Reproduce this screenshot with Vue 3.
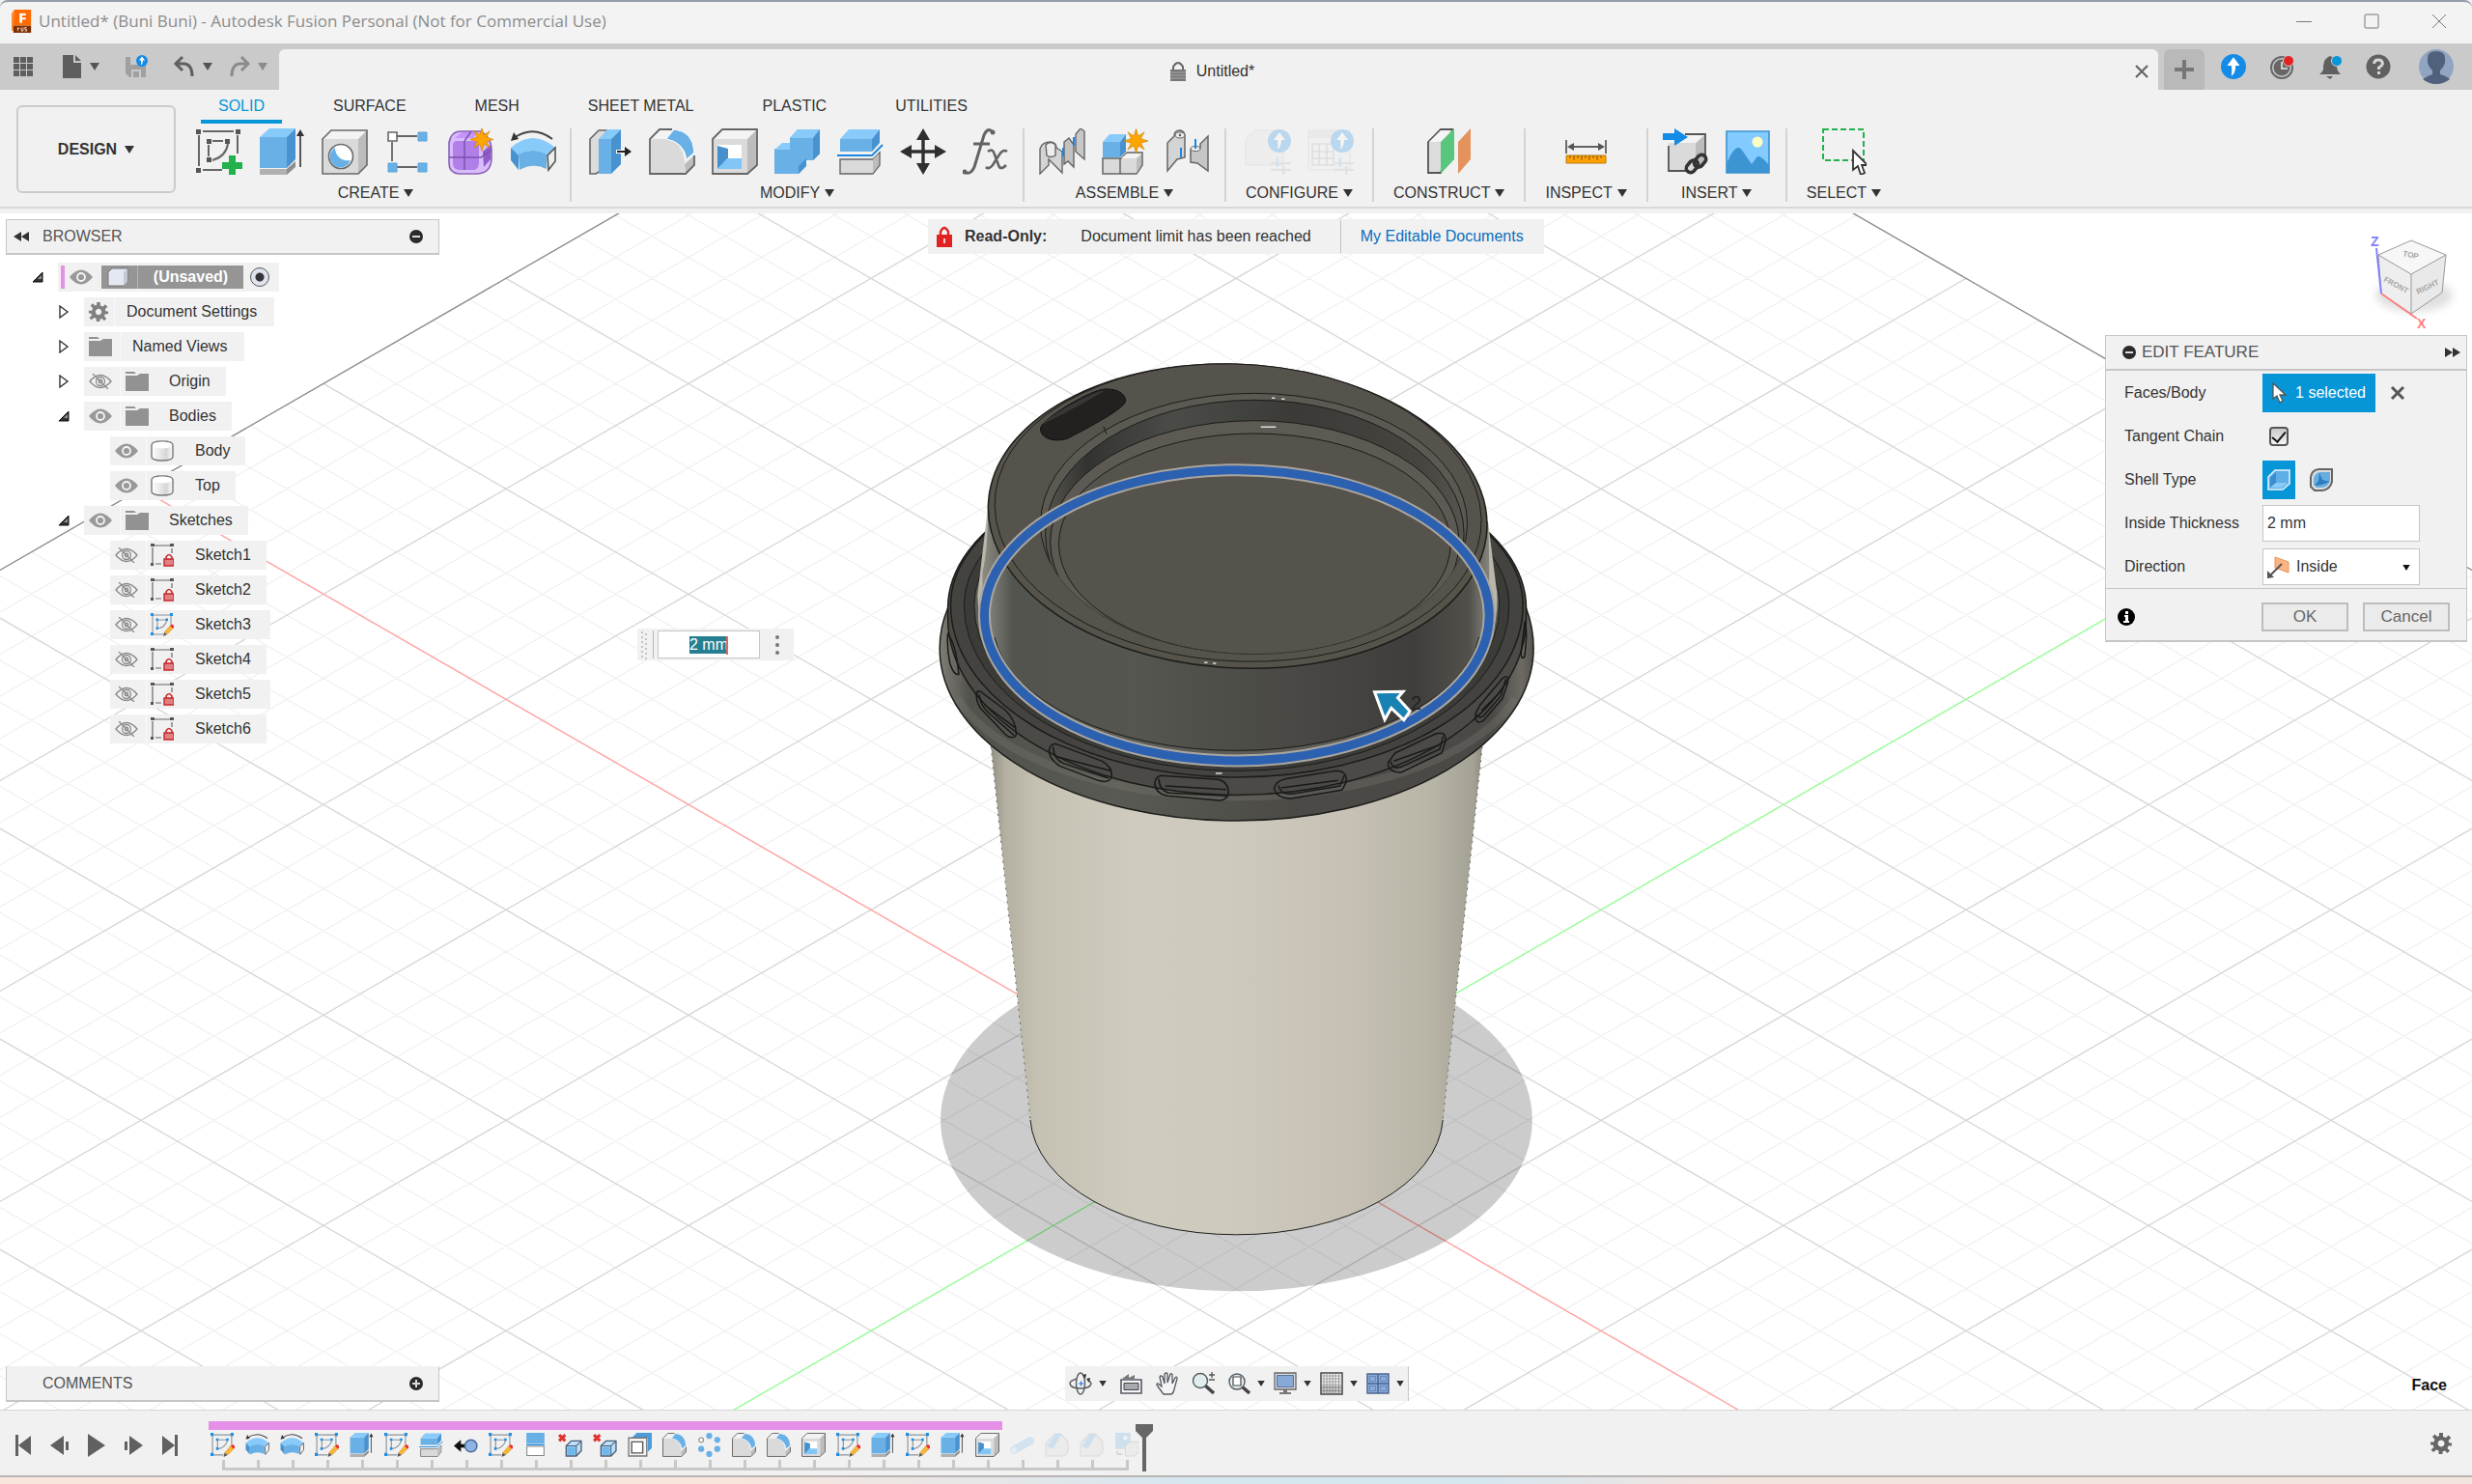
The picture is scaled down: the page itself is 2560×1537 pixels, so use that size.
<script setup>
import { onMounted, ref } from 'vue'

const tabs = ['SOLID', 'SURFACE', 'MESH', 'SHEET METAL', 'PLASTIC', 'UTILITIES']

const panels = [
  { name: 'CREATE', icons: ['sketch-new', 'extrude', 'hole', 'pattern', 'form', 'revolve'] },
  { name: 'MODIFY', icons: ['presspull', 'fillet', 'shell', 'combine', 'split', 'move', 'fx'] },
  { name: 'ASSEMBLE', icons: ['joint', 'component', 'asbuilt'] },
  { name: 'CONFIGURE', icons: ['config', 'config-table'], off: true },
  { name: 'CONSTRUCT', icons: ['plane'] },
  { name: 'INSPECT', icons: ['measure'] },
  { name: 'INSERT', icons: ['derive', 'picture'] },
  { name: 'SELECT', icons: ['select'] },
]

const tree = [
  { label: 'Document Settings', level: 1, toggle: 'closed', cells: ['gear'], tight: true },
  { label: 'Named Views', level: 1, toggle: 'closed', cells: ['folder'], tight: true },
  { label: 'Origin', level: 1, toggle: 'closed', cells: ['hidden', 'folder'] },
  { label: 'Bodies', level: 1, toggle: 'open', cells: ['eye', 'folder'] },
  { label: 'Body', level: 2, cells: ['eye', 'body'] },
  { label: 'Top', level: 2, cells: ['eye', 'body'] },
  { label: 'Sketches', level: 1, toggle: 'open', cells: ['eye', 'folder'] },
  { label: 'Sketch1', level: 2, cells: ['hidden', 'sketch-lock'] },
  { label: 'Sketch2', level: 2, cells: ['hidden', 'sketch-lock'] },
  { label: 'Sketch3', level: 2, cells: ['hidden', 'sketch'], wide: true },
  { label: 'Sketch4', level: 2, cells: ['hidden', 'sketch-lock'] },
  { label: 'Sketch5', level: 2, cells: ['hidden', 'sketch-lock'], wide: true },
  { label: 'Sketch6', level: 2, cells: ['hidden', 'sketch-lock'] },
]

const timeline = [
  'sketch', 'revolve', 'revolve', 'sketch', 'extrude', 'sketch', 'split', 'offset', 'sketch',
  'halfplane', 'remove', 'remove', 'scale', 'fillet', 'circular', 'fillet', 'fillet', 'shell',
  'sketch', 'extrude', 'sketch', 'extrude', 'shell', 'pipe', 'chamfer', 'chamfer', 'decal',
]
const firstSuppressed = 23

const playback = ['first', 'prev', 'play', 'next', 'last']

const navTools = [
  { icon: 'orbit', menu: true },
  { icon: 'lookat' },
  { icon: 'pan' },
  { icon: 'zoom' },
  { icon: 'fit', menu: true },
  { icon: 'display', menu: true },
  { icon: 'grid', menu: true },
  { icon: 'views', menu: true },
]

// Ground grid: cell (i, j) of the plane projected around the model origin.
const point = (i, j) => `${(1280 + (j - i) * 37.8).toFixed(1)} ${(1160.3 + (i + j) * 21.8).toFixed(1)}`
const gridPath = (major) => {
  let d = ''
  for (let n = -30; n <= 75; n++) {
    if (n === 0 || n === -30 || (n % 5 === 0) !== major) continue
    d += `M${point(n, -30)}L${point(n, 80)}M${point(-30, n)}L${point(80, n)}`
  }
  return d
}
const minor = gridPath(false)
const major = gridPath(true)
const edge = `M${point(75, -30)}L${point(-30, -30)}L${point(-30, 75)}`
const xAxis = `M${point(0, -30)}L${point(0, 75)}`
const yAxis = `M${point(-30, 0)}L${point(75, 0)}`

const floatingValue = ref(null)
const thickness = ref('2 mm')
const chain = ref(true)
onMounted(() => {
  floatingValue.value.focus()
  floatingValue.value.select()
})
</script>

<template>
  <div class="app">
    <svg class="defs" aria-hidden="true">
      <symbol id="i-sketch-new" viewBox="0 0 48 48">
        <g fill="none" stroke="#666" stroke-width="2"><path d="M7 3H39M43 7V26M3 7V39M7 43H27M17 13H28M13 17V29" /><path d="M33 16Q31 29 17 33" /></g>
        <path fill="#555" d="M0 1h5v5H0zM41 1h5v5h-5zM0 41h5v5H0zM11 11h5v5h-5zM30 11h5v5h-5zM11 30h5v5h-5z" />
        <path fill="#22b14c" d="M34 28h7v7h7v7h-7v6h-7v-6h-7v-7h7z" />
      </symbol>
      <symbol id="i-extrude" viewBox="0 0 48 48">
        <path fill="#68b0e6" d="M1 9H29V41H1z" /><path fill="#88cbfb" d="M1 9L11 0H38L29 9z" /><path fill="#4893cf" d="M29 9L38 0V32L29 41z" />
        <path fill="#b0b0b0" d="M1 42H29V48H1z" /><path fill="#8e8e8e" d="M29 42L38 34V40L29 48z" />
        <path d="M43 5V40" stroke="#333" stroke-width="1.6" /><path fill="#333" d="M43 1l4 7h-8z" />
      </symbol>
      <symbol id="i-hole" viewBox="0 0 48 48">
        <path fill="#dadada" d="M1 11H38V47H1z" /><path fill="#f3f3f3" d="M1 11L10 2H47L38 11z" /><path fill="#bcbcbc" d="M38 11L47 2V38L38 47z" />
        <path d="M1 11L10 2H47V38L38 47H1z" fill="none" stroke="#6a6a6a" stroke-width="1.6" />
        <ellipse cx="20" cy="29" rx="12.500" ry="12.500" fill="#fff" stroke="#6a6a6a" stroke-width="1.6" />
        <path fill="#68b0e6" d="M14 20A11 11 0 1 0 30 33A13 13 0 0 1 14 20z" />
      </symbol>
      <symbol id="i-pattern" viewBox="0 0 48 48">
        <path d="M13 8H34M8 14V34M13 40H34" stroke="#666" stroke-width="1.8" /><path fill="#fff" stroke="#666" stroke-width="1.600" d="M4 4h9v9H4z" />
        <path fill="#68b0e6" stroke="#5aa2da" d="M35 4h9v9h-9zM4 36h9v9H4zM35 36h9v9h-9z" />
      </symbol>
      <symbol id="i-form" viewBox="0 0 48 48">
        <path fill="#d9bdfb" stroke="#8a62b8" stroke-width="1.6" d="M2 15Q4 3 14 3H35Q46 10 46 22V32Q45 47 30 47H12Q2 46 2 36z" />
        <path fill="#b07fe8" d="M6 18Q6 13 10 13H28Q33 14 33 18V37Q32 43 27 43H12Q6 42 6 36z" /><path fill="#8f5cc9" d="M37 24L45 17V32L38 40z" /><path fill="#c493ff" d="M8 10L15 4H31L27 10z" />
        <path d="M18 13V43M2 30H35L46 22M18 13L25 3" fill="none" stroke="#7a52ab" stroke-width="1.4" />
        <use href="#i-star" x="24" y="-1" width="24" height="25" />
      </symbol>
      <symbol id="i-star" viewBox="0 0 24 24"><path fill="#ffa500" stroke="#c98200" stroke-width=".6" d="M12 0l2.200 7.200 6-4-3.400 6.400L24 12l-7.200 2.200 3.400 6.200-6-3.600L12 24l-2.200-7.200-6 3.600 3.400-6.200L0 12l7.200-2.400-3.400-6.400 6 4z" /></symbol>
      <symbol id="i-revolve" viewBox="0 0 48 48">
        <path fill="none" stroke="#444" stroke-width="2" d="M4 10Q24-4 44 11" /><path fill="#333" d="M1 13L4 4L9 11z" />
        <path fill="#88cbfb" d="M1 20Q24 0 47 20L39 28Q24 18 8 28z" /><path fill="#68b0e6" d="M9 27Q24 19 38 27V42Q24 35 10 43z" /><path fill="#4893cf" d="M1 20L9 28V43L1 33z" />
        <path fill="#eee" stroke="#555" stroke-width="1.600" d="M39 28L47 20V34L40 43z" />
      </symbol>
      <symbol id="i-presspull" viewBox="0 0 48 48">
        <path fill="#dcdcdc" stroke="#666" stroke-width="1.600" d="M10 47H4V11L13 2H21V40z" /><path fill="#68b0e6" d="M13 11H26V47H13z" /><path fill="#88cbfb" d="M13 11L22 1H36L26 11z" /><path fill="#4893cf" d="M26 11L36 1V37L26 47z" />
        <path stroke="#fff" stroke-width="4" d="M31 24H42" /><path d="M32 24H42" stroke="#222" stroke-width="2" /><path fill="#222" d="M40 19l7 5-7 5z" />
      </symbol>
      <symbol id="i-fillet" viewBox="0 0 48 48">
        <path fill="#dadada" d="M1 11H18Q36 14 37 37V47H1z" /><path fill="#f3f3f3" d="M1 11L11 1H26L18 11z" /><path fill="#bcbcbc" d="M37 37L47 28V38L38 47z" />
        <path d="M47 28V38L38 47H1V11L11 1H24" fill="none" stroke="#666" stroke-width="1.800" /><path fill="#68b0e6" stroke="#fff" d="M18 11L26 1Q46 3 47 25L39 32Q36 14 18 11z" />
      </symbol>
      <symbol id="i-shell" viewBox="0 0 48 48">
        <path fill="#dadada" d="M1 11H37V47H1z" /><path fill="#f3f3f3" d="M1 11L11 1H47L37 11z" /><path fill="#bcbcbc" d="M37 11L47 1V38L37 47z" />
        <path d="M1 11L11 1H47V38L37 47H1z" fill="none" stroke="#666" stroke-width="1.800" /><path fill="#fff" d="M6 17H31V42H6z" /><path fill="#4590cc" d="M6 18L17 21V32L6 42z" /><path fill="#82c6f8" d="M6 42L16 31H31V42z" />
      </symbol>
      <symbol id="i-combine" viewBox="0 0 48 48">
        <path fill="#68b0e6" d="M0 21H16V10L24 1H47V26L40 33H33V39L25 47H0z" /><path fill="#88cbfb" d="M0 22L8 15H16V10L24 1H47L40 10H16V22z" /><path fill="#4893cf" d="M40 10L47 1V26L40 33zM25 39L33 31V39L25 47z" />
      </symbol>
      <symbol id="i-split" viewBox="0 0 48 48">
        <path fill="#68b0e6" d="M3 11H36V24H3z" /><path fill="#88cbfb" d="M3 11L12 1H44L36 11z" /><path fill="#4893cf" d="M36 11L44 1V15L36 24z" /><path d="M0 28H36L47 17" fill="none" stroke="#1c86df" stroke-width="1.800" />
        <path fill="#dadada" stroke="#666" stroke-width="1.400" d="M3 32H37L44 25V38L37 47H3z" /><path fill="#bcbcbc" d="M37 32L43 26V38L37 46z" />
      </symbol>
      <symbol id="i-move" viewBox="0 0 48 48"><path d="M24 8V40M8 24H40" stroke="#2f2f2f" stroke-width="3.400" /><path fill="#2f2f2f" d="M24 0l7 12H17zM24 48l7-12H17zM0 24l12-7v14zM48 24l-12-7v14z" /></symbol>
      <symbol id="i-fx" viewBox="0 0 48 48">
        <path d="M31 4Q26-2 22 7L12 40Q8 49 1 45M11 16H28" fill="none" stroke="#636363" stroke-width="3" /><path d="M26 24Q31 20 33 27L37 38Q39 44 45 38M46 24Q42 21 38 27L31 38Q27 43 24 40" fill="none" stroke="#636363" stroke-width="2.600" /><circle cx="31" cy="4" r="2.500" fill="#636363" /><circle cx="2" cy="45" r="2.500" fill="#636363" />
      </symbol>
      <symbol id="i-joint" viewBox="0 0 48 48">
        <g fill="#d4d4d4" stroke="#666" stroke-width="1.400"><path d="M1 47V21Q3 14 12 14Q18 15 18 20L24 24V46L18 40L10 32V38z" /><path fill="#c2c2c2" d="M26 37V14L31 10L36 17V40L30 34z" /><path fill="#c8c8c8" d="M38 24V6L43 0L47 3V32z" /></g>
        <path fill="#eee" stroke="#666" stroke-width="1.400" d="M7 17Q12 12 17 17V28Q12 31 8 28z" /><path d="M25 20V29M36 9V18" stroke="#1c86df" stroke-width="2" />
      </symbol>
      <symbol id="i-component" viewBox="0 0 48 48">
        <path fill="#68b0e6" d="M1 14H19V30H1z" /><path fill="#88cbfb" d="M1 14L8 6H25L19 14z" /><path fill="#4893cf" d="M19 14L25 6V24L19 30z" />
        <path fill="#dadada" stroke="#666" stroke-width="1.500" d="M1 31H20L26 25H42V38L36 47H1z" /><path fill="#f3f3f3" d="M20 31L26 26H41L35 31z" /><path fill="#bcbcbc" d="M36 32L41 27V38L36 46z" /><path d="M19 31V47" stroke="#666" stroke-width="1.500" /><use href="#i-star" x="23" y="0" width="25" height="26" />
      </symbol>
      <symbol id="i-asbuilt" viewBox="0 0 48 48">
        <path fill="#d4d4d4" stroke="#666" stroke-width="1.500" d="M3 44V15L10 8Q10 2 16 2Q21 3 21 8V30L13 32z" /><ellipse cx="16" cy="7" rx="5" ry="3" fill="#eee" stroke="#666" /><circle cx="16" cy="7" r="1.200" fill="#555" />
        <path fill="#c6c6c6" stroke="#666" stroke-width="1.500" d="M45 44V8L37 16V20L27 22V35L34 36z" /><ellipse cx="32" cy="21" rx="5" ry="2.500" fill="#eee" stroke="#666" /><path d="M17 20V30M32 11V21" stroke="#1c86df" stroke-width="2" />
      </symbol>
      <symbol id="i-up" viewBox="0 0 24 24"><circle cx="12" cy="12" r="12" fill="#158be8" /><path fill="#fff" d="M12 3l6 8h-4q0 7-4 10q1-5 0-10H6z" /></symbol>
      <symbol id="i-tune" viewBox="0 0 22 18"><path d="M0 6H22M0 13H22" stroke="#b8b8b8" stroke-width="2.400" /><path d="M7 0V10" stroke="#85bdea" stroke-width="3" /><path d="M14 9V18" stroke="#b8b8b8" stroke-width="3" /></symbol>
      <symbol id="i-config" viewBox="0 0 48 48"><path fill="#e5e5e5" stroke="#bbb" d="M1 11L10 2H40V38H1z" /><use href="#i-up" x="24" y="1" width="24" height="24" /><use href="#i-tune" x="27" y="30" width="21" height="18" /></symbol>
      <symbol id="i-config-table" viewBox="0 0 48 48"><path fill="#eee" stroke="#bbb" d="M1 2H44V43H1z" /><path fill="#d4d4d4" d="M1 2H44V10H1z" /><path d="M5 16H27V38H5zM12 16V38M20 16V38M5 24H27M5 31H27" fill="none" stroke="#aaa" stroke-width="1.600" /><use href="#i-up" x="24" y="1" width="24" height="24" /><use href="#i-tune" x="27" y="30" width="21" height="18" /></symbol>
      <symbol id="i-plane" viewBox="0 0 48 48"><path fill="#dcdcdc" stroke="#555" stroke-width="1.800" d="M15 46H2V14L15 1H27z" /><path fill="#f5f5f5" d="M3 14L15 2H26L16 14z" /><path fill="#58c67c" d="M15 14L29 0V32L15 47z" /><path fill="#e4935f" d="M33 14L46 0V32L33 47z" /></symbol>
      <symbol id="i-measure" viewBox="0 0 48 48"><path d="M3 12V26M44 12V26M6 19H41" stroke="#606060" stroke-width="1.800" /><path fill="#555" d="M4 19l7-4v8zM43 19l-7-4v8z" /><path fill="#ffa200" stroke="#b97a18" d="M3 28H44V36H3z" /><path d="M7 28v3M11 28v5M15 28v3M19 28v5M23 28v3M27 28v5M31 28v3M35 28v5M39 28v3" stroke="#7d541a" /></symbol>
      <symbol id="i-derive" viewBox="0 0 48 48"><path fill="#dadada" d="M7 15H35V44H7z" /><path fill="#bcbcbc" d="M35 15L45 6V34L35 44z" /><path fill="#f3f3f3" d="M7 15L16 6H45L35 15z" /><path d="M7 18V44H25M24 6H45V28" fill="none" stroke="#555" stroke-width="1.800" /><path fill="#158be8" d="M1 5H13V0L27 9L13 18V12H1z" /><g fill="none" stroke="#333" stroke-width="3.600"><rect x="24" y="35" width="14" height="9" rx="4.500" transform="rotate(-50 31 39)" /><rect x="33" y="29" width="14" height="9" rx="4.500" transform="rotate(-50 40 34)" /></g></symbol>
      <symbol id="i-picture" viewBox="0 0 48 48"><path fill="#82caff" stroke="#3f93cf" stroke-width="1.600" d="M2 3H46V46H2z" /><circle cx="34" cy="14" r="5.500" fill="#ffffc4" /><path fill="#3d94d2" d="M2 37Q12 12 19 24L28 37L34 29Q38 28 46 38V46H2z" /></symbol>
      <symbol id="i-select" viewBox="0 0 48 48"><path fill="none" stroke="#22b14c" stroke-width="2" stroke-dasharray="6 3" d="M3 1H45V33H3z" /><path fill="#fff" stroke="#333" stroke-width="1.800" d="M34 23V43L39 39L42 48L46 46L43 38H49z" /></symbol>
      <symbol id="i-gear" viewBox="0 0 24 24"><path fill="currentColor" d="M10 1h4v4l3 1 2.500-2.500 2.800 2.800L19.500 9l1 2.500H23v3h-3.500l-1 2.500 2.500 2.500-2.500 2.500-2.500-2.500-2.500 1V23h-4v-3.500l-2.500-1L4 21l-2.500-2.500L4.500 16l-1-2.500H1v-3h3.500l1-2.500L3 5l2.500-2.500L8 5l2-1zM12 8.500a3.500 3.500 0 1 0 .1 0z" fill-rule="evenodd" /></symbol>
      <symbol id="i-folder" viewBox="0 0 26 22"><path fill="#929292" d="M1 1h9l2 2H1zM1 5h12l3-2h9v18H1z" /></symbol>
      <symbol id="i-eye" viewBox="0 0 24 16"><path fill="#999" d="M0 8Q12-7 24 8Q12 23 0 8z" /><circle cx="12" cy="8" r="4" fill="none" stroke="#f5f5f5" stroke-width="1.800" /></symbol>
      <symbol id="i-hidden" viewBox="0 0 24 16"><g fill="none" stroke="#8a8a8a" stroke-width="1.300"><path d="M1 8Q12-5 23 8Q12 21 1 8zM4 0L20 16" /><circle cx="12" cy="8" r="4.500" /><circle cx="12" cy="8" r="1.800" /></g></symbol>
      <symbol id="i-body" viewBox="0 0 24 24"><path fill="url(#bodyFill)" stroke="#777" stroke-width="1.400" d="M1 6Q1 2 12 2T23 6V18Q23 22 12 22T1 18z" /><ellipse cx="12" cy="6" rx="10" ry="3.400" fill="#fff" /></symbol>
      <symbol id="i-sketch-lock" viewBox="0 0 24 24"><path d="M4 2H20M2 4V20M22 5V10M5 21H11" stroke="#666" stroke-width="1.200" /><path fill="#555" d="M0 0h4v3H0zM20 0h4v3h-4zM0 20h3v3H0z" /><path d="M16 16v-2q3-5 6 0v2" fill="none" stroke="#cc2a2e" stroke-width="1.600" /><path fill="#e08080" stroke="#c8242a" stroke-width="1.400" d="M14 16h10v7H14z" /></symbol>
      <symbol id="i-sketch" viewBox="0 0 24 24"><path d="M1 2H22M2 1V22H13M21 2V12M7 7H16M7 7V16Q15 15 17 7" fill="none" stroke="#8d9499" stroke-width="1.100" /><path fill="#1c8fe8" d="M0 0h3v3H0zM20 0h3v3h-3zM0 20h3v3H0zM5.500 5.500h2.500v2.500H5.500zM15.500 5.500h2.500v2.500h-2.500zM5.500 14.500h2.500v2.500H5.500z" /><path fill="#f5b63a" stroke="#d3922a" stroke-width=".5" d="M14 20l6-7 3 3-6 6z" /><path fill="#ee2b2b" d="M20 13l2-1.500 2 1.500v2l-1 1z" /><path fill="#555" d="M14 20l3 2-4 2z" /></symbol>
      <symbol id="i-offset" viewBox="0 0 24 24"><path d="M5 13H13" stroke="#111" stroke-width="3.500" /><path fill="#111" d="M0 13l7-6v12z" /><circle cx="17" cy="13" r="6" fill="#8fb4e4" stroke="#4b6c9b" stroke-width="1.400" /></symbol>
      <symbol id="i-halfplane" viewBox="0 0 24 24"><path fill="#68b0e6" d="M3 0H21V11H3z" /><path fill="#fff" stroke="#888" d="M3.500 13.500H20.500V22.500H3.500z" /><path d="M3 12H21" stroke="#1c86df" /></symbol>
      <symbol id="i-remove" viewBox="0 0 24 24"><path d="M1 2L7 8M7 2L1 8" stroke="#e03131" stroke-width="3" /><path fill="#bce0fa" stroke="#4d5e78" stroke-width="1.300" d="M8 13L13 8H23V18L18 23H8z" /><path fill="#6fb8ec" d="M9 14H17V22H9z" /><path d="M8 13H18L23 8M18 13V23" fill="none" stroke="#4d5e78" /></symbol>
      <symbol id="i-scale" viewBox="0 0 24 24"><path fill="#4c9bdb" d="M4 5L9 0H24V15L20 19V5z" /><path fill="#f4f4f4" stroke="#777" stroke-width="1.300" d="M1 5H19V23H1z" /><path fill="#fff" stroke="#555" stroke-width="1.300" d="M4 9H15V20H4z" /></symbol>
      <symbol id="i-circular" viewBox="0 0 24 24"><g fill="#68b0e6"><circle cx="12" cy="3" r="3" /><circle cx="20" cy="7" r="3" /><circle cx="20" cy="16" r="3" /><circle cx="12" cy="21" r="3" /><circle cx="4" cy="16" r="3" /></g><circle cx="4" cy="7" r="2.300" fill="#fff" stroke="#888" /></symbol>
      <symbol id="i-pipe" viewBox="0 0 24 24"><path d="M4 17L20 8" stroke="#78b8e6" stroke-width="8" stroke-linecap="round" /><circle cx="4" cy="17" r="3" fill="#bfe0f7" /></symbol>
      <symbol id="i-chamfer" viewBox="0 0 24 24"><path fill="#dadada" stroke="#999" d="M1 23V10L10 1H16L23 9V19L19 23z" /><path fill="#68b0e6" d="M2 13L11 1H17L8 16z" /></symbol>
      <symbol id="i-decal" viewBox="0 0 24 24"><path fill="#68b0e6" d="M1 0H16V16H1z" /><circle cx="11" cy="5" r="2" fill="#fff" /><path fill="#dadada" stroke="#999" d="M11 13L15 9H24V19L20 23H11z" /><path d="M3 18V21H8" stroke="#777" fill="none" stroke-width="1.500" /></symbol>
      <symbol id="i-first" viewBox="0 0 24 24"><path fill="#606060" d="M4 1h3v22H4zM20 2v20L7 12z" /></symbol>
      <symbol id="i-prev" viewBox="0 0 24 24"><path fill="#606060" d="M16 2v20L2 12zM18 8h3v9h-3z" /></symbol>
      <symbol id="i-play" viewBox="0 0 24 24"><path fill="#606060" d="M3 0L21 12L3 24z" /></symbol>
      <symbol id="i-next" viewBox="0 0 24 24"><path fill="#606060" d="M8 2v20l14-10zM3 8h3v9H3z" /></symbol>
      <symbol id="i-last" viewBox="0 0 24 24"><path fill="#606060" d="M17 1h3v22h-3zM4 2v20l13-10z" /></symbol>
      <symbol id="i-orbit" viewBox="0 0 24 24"><g fill="none" stroke="#5d6166" stroke-width="1.500"><ellipse cx="12" cy="12" rx="4.500" ry="11" /><path d="M8 7Q1 9 1 12Q2 17 12 17T23 12Q22 9 19 8" /></g><path d="M10 12h5M12.500 9.500v5" stroke="#1c7bd8" stroke-width="1.200" /><path fill="#333" d="M14 3l4-1-1 5zM18 7l4-1-1 5z" /></symbol>
      <symbol id="i-lookat" viewBox="0 0 24 24"><path fill="#777" d="M2 7L9 2V6L15 3V7z" /><path fill="#f4f4f6" stroke="#555a63" stroke-width="1.600" d="M1 8H22V22H1z" /><path fill="#a6a9ae" stroke="#444" d="M4 11.500H19V18.500H4z" /></symbol>
      <symbol id="i-pan" viewBox="0 0 24 24"><path fill="#f4f4f6" stroke="#555a63" stroke-width="1.300" d="M8 23L2 15Q0 12 2 12L6 15L4 5Q5 3 7 5L9 12V2Q11 0 12 2V11L15 2Q17 1 17 3V12L20 6Q22 4 22 7L19 18Q18 23 15 23z" /></symbol>
      <symbol id="i-zoom" viewBox="0 0 24 24"><path d="M14 14L23 22" stroke="#444" stroke-width="3.500" /><circle cx="9" cy="9" r="7.500" fill="#e2eeee" stroke="#555a63" stroke-width="1.400" /><path d="M18 3h6M21 0v6M18 8h6" stroke="#555" stroke-width="1.300" /></symbol>
      <symbol id="i-fit" viewBox="0 0 24 24"><path d="M15 15L23 22" stroke="#444" stroke-width="3.500" /><circle cx="10" cy="10" r="8" fill="#e2eeee" stroke="#555a63" stroke-width="1.400" /><path fill="#fff" stroke="#444" stroke-width="1.200" d="M6 5H14V14H6z" /></symbol>
      <symbol id="i-display" viewBox="0 0 24 24"><path fill="#d9d9d9" stroke="#666" stroke-width="1.300" d="M1 1H23V18H1z" /><path fill="#87a9d8" stroke="#56749d" d="M3.500 3.500H20.500V15.500H3.500z" /><path fill="#777" d="M10 18h4v3h4v2H6v-2h4z" /></symbol>
      <symbol id="i-grid" viewBox="0 0 24 24"><path fill="#f8f8f8" stroke="#444" stroke-width="1.500" d="M1 1H23V23H1z" /><path d="M4 1V23M7 1V23M10 1V23M13 1V23M16 1V23M19.500 1V23M1 4H23M1 7H23M1 10H23M1 13H23M1 16H23M1 19.500H23" stroke="#888" stroke-width=".8" /><path fill="#555" opacity=".25" d="M1 14h22v9H1z" /></symbol>
      <symbol id="i-views" viewBox="0 0 24 24"><path fill="#8cabda" stroke="#4a6691" stroke-width="1.500" d="M1 2H23V22H1z" /><path d="M12 2V22M1 12H23" stroke="#4a6691" stroke-width="1.500" /><path fill="none" stroke="#6485b5" d="M3.500 4.500h6v5h-6zM14.500 4.500h6v5h-6zM3.500 14.500h6v5h-6zM14.500 14.500h6v5h-6z" /></symbol>
      <symbol id="i-down" viewBox="0 0 10 8"><path fill="currentColor" d="M0 0H10L5 8z" /></symbol>
      <symbol id="i-minus" viewBox="0 0 14 14"><circle cx="7" cy="7" r="7" fill="#2b2b2b" /><path d="M3 7H11" stroke="#ddd" stroke-width="2" /></symbol>
      <symbol id="i-plus" viewBox="0 0 14 14"><circle cx="7" cy="7" r="7" fill="#2b2b2b" /><path d="M3 7H11M7 3V11" stroke="#ddd" stroke-width="2" /></symbol>
      <symbol id="i-lock" viewBox="0 0 18 22"><path d="M5 10V6Q9-2 13 6V10" fill="none" stroke="currentColor" stroke-width="2.400" /><path fill="currentColor" d="M1 9H17V22H1z" /><path fill="#fff" opacity=".8" d="M8 13h2v5H8z" /></symbol>
      <symbol id="i-open" viewBox="0 0 12 12"><path fill="#333" stroke="#111" d="M11 1V11H1z" /><path fill="#999" d="M10 4V8H6z" /></symbol>
      <symbol id="i-closed" viewBox="0 0 10 14"><path fill="#fff" stroke="#333" stroke-width="1.400" d="M1 1L9 7L1 13z" /></symbol>
      <linearGradient id="bodyFill"><stop offset="0" stop-color="#fff" /><stop offset=".7" stop-color="#d6d6d8" /><stop offset="1" stop-color="#fff" /></linearGradient>
    </svg>

    <div class="titlebar">
      <svg class="logo" viewBox="0 0 24 26" aria-hidden="true"><path fill="#ff8a33" d="M0 4L3 0V23L0 24z" /><path fill="#ff6b00" d="M3 0H22V18H2z" /><path fill="#7d2c00" d="M2 18H22V26H2z" /><path fill="#fff" d="M9 4h7v2.500h-4V9h4v2h-4v4H9z" /><path d="M7 20v4M7 21h2M11 20v4h2v-4M17 20h-2v2h2v2h-2" stroke="#f5d9c7" fill="none" /></svg>
      <h1>Untitled* (Buni Buni) - Autodesk Fusion Personal (Not for Commercial Use)</h1>
      <div class="window-controls">
        <button aria-label="Minimize"><svg viewBox="0 0 16 16"><path d="M0 8.500H16" /></svg></button>
        <button aria-label="Maximize"><svg viewBox="0 0 16 16"><rect x="1" y="1" width="14" height="14" rx="1" /></svg></button>
        <button aria-label="Close"><svg viewBox="0 0 16 16"><path d="M1 1L15 15M15 1L1 15" /></svg></button>
      </div>
    </div>

    <header class="docbar">
      <div class="quick">
        <button aria-label="Data panel"><svg class="i24" viewBox="0 0 24 24"><path fill="#5e5e5e" d="M2 2h6v6H2zM9 2h6v6H9zM16 2h6v6h-6zM2 9h6v6H2zM9 9h6v6H9zM16 9h6v6h-6zM2 16h6v6H2zM9 16h6v6H9zM16 16h6v6h-6z" /></svg></button>
        <button aria-label="File"><svg class="i24" viewBox="0 0 24 24"><path fill="#5e5e5e" d="M3 0H14V8H22V24H3zM16 0L22 6H16z" /></svg><svg class="arrow"><use href="#i-down" /></svg></button>
        <button aria-label="Save"><svg class="i24" viewBox="0 0 24 24"><path fill="#a0a0a0" d="M1 2H22V23H5L1 19z" /><path fill="#c9c9c9" d="M6 2h8v8H6zM7 15h10v8H7z" /><path fill="#a0a0a0" d="M9 17h6v6H9z" /><use href="#i-up" x="12" y="0" width="12" height="12" /></svg></button>
        <div class="history">
          <button aria-label="Undo"><svg class="i24" viewBox="0 0 24 24"><path d="M3 9H12Q20 10 20 22M10 2L3 9L10 16" fill="none" stroke="#606060" stroke-width="3" /></svg><svg class="arrow"><use href="#i-down" /></svg></button>
          <button class="dim" aria-label="Redo"><svg class="i24" viewBox="0 0 24 24"><path d="M21 9H12Q4 10 4 22M14 2L21 9L14 16" fill="none" stroke="#8c8c8c" stroke-width="3" /></svg><svg class="arrow"><use href="#i-down" /></svg></button>
        </div>
      </div>
      <div class="doctab">
        <span class="docname"><svg class="doclock" viewBox="0 0 18 22"><path d="M4 10V6Q9-2 14 6V10" fill="none" stroke="#666" stroke-width="2" /><path fill="#777" d="M1 9H17V21H1z" /><path d="M1 12H17M1 15H17M1 18H17" stroke="#aaa" /></svg>Untitled*</span>
        <button class="tabclose" aria-label="Close tab"><svg viewBox="0 0 14 14"><path d="M1 1L13 13M13 1L1 13" stroke="#666" stroke-width="2.200" /></svg></button>
      </div>
      <button class="newtab" aria-label="New tab"><svg viewBox="0 0 20 20"><path d="M10 0V20M0 10H20" stroke="#777" stroke-width="4" /></svg></button>
      <div class="account">
        <button aria-label="Updates"><svg class="i26"><use href="#i-up" /></svg></button>
        <button aria-label="Job status"><svg class="i26" viewBox="0 0 26 26"><circle cx="13" cy="14" r="11" fill="none" stroke="#666" stroke-width="2" /><circle cx="13" cy="14" r="8.500" fill="#666" /><path d="M13 8V15H19" fill="none" stroke="#ccc" stroke-width="2" /><circle cx="20" cy="7" r="5.500" fill="#e12222" stroke="#ccc" /></svg></button>
        <button aria-label="Notifications"><svg class="i26" viewBox="0 0 26 26"><path fill="#606060" d="M2 21Q7 18 6 12Q7 4 13 2Q20 4 20 12Q20 18 24 21zM9 23h7l-3 3z" /><circle cx="20" cy="7" r="5.500" fill="#0696d7" stroke="#ccc" /></svg></button>
        <button aria-label="Help"><svg class="i26" viewBox="0 0 26 26"><circle cx="13" cy="13" r="12.500" fill="#606060" /><path d="M8.500 10Q9 6 13 6T17.500 10Q17 12 13.500 14V16" fill="none" stroke="#d5d5d5" stroke-width="3" /><path fill="#d5d5d5" d="M12 18h3v3h-3z" /></svg></button>
        <button class="avatar" aria-label="Profile"><svg viewBox="0 0 36 36"><circle cx="18" cy="18" r="18" fill="#91a5c3" /><path fill="#50617c" d="M9 9Q9 2 18 2T27 9Q28 17 22 22V26Q29 28 32 31Q26 36 18 36T4 31Q8 28 14 26V22Q8 17 9 9z" /></svg></button>
      </div>
    </header>

    <section class="toolbar">
      <button class="workspace">DESIGN <svg class="arrow"><use href="#i-down" /></svg></button>
      <div class="ribbon">
        <nav class="tabs">
          <button v-for="(t, i) in tabs" :key="t" :class="{ active: i === 0 }">{{ t }}</button>
        </nav>
        <div class="panels">
          <div v-for="p in panels" :key="p.name" class="panel">
            <div class="tools" :class="{ off: p.off }">
              <button v-for="ic in p.icons" :key="ic" :aria-label="ic" :disabled="p.off"><svg class="i48"><use :href="'#i-' + ic" /></svg></button>
            </div>
            <button class="menu">{{ p.name }} <svg class="arrow"><use href="#i-down" /></svg></button>
          </div>
        </div>
      </div>
    </section>

    <main class="canvas">
      <svg class="scene" viewBox="0 221 2560 1239" preserveAspectRatio="xMidYMid slice" aria-hidden="true">
        <defs>
          <linearGradient id="cupBody"><stop offset="0" stop-color="#8f8c80" /><stop offset=".03" stop-color="#b3b0a2" /><stop offset=".1" stop-color="#c5c2b4" /><stop offset=".3" stop-color="#cfccbf" /><stop offset=".5" stop-color="#cdc9bc" /><stop offset=".72" stop-color="#c6c1b4" /><stop offset=".9" stop-color="#b7b4a6" /><stop offset=".98" stop-color="#a3a194" /><stop offset="1" stop-color="#8b887c" /></linearGradient>
          <linearGradient id="skirt"><stop offset="0" stop-color="#807d75" /><stop offset=".05" stop-color="#52524d" /><stop offset=".3" stop-color="#5a5a54" /><stop offset=".6" stop-color="#4b4a46" /><stop offset=".93" stop-color="#4a4946" /><stop offset=".98" stop-color="#6d6a63" /><stop offset="1" stop-color="#55534e" /></linearGradient>
          <linearGradient id="dome"><stop offset="0" stop-color="#8d8c85" /><stop offset=".06" stop-color="#53544f" /><stop offset=".3" stop-color="#555650" /><stop offset=".6" stop-color="#4a4945" /><stop offset=".85" stop-color="#3f3e3b" /><stop offset=".96" stop-color="#51504b" /><stop offset="1" stop-color="#85837b" /></linearGradient>
          <linearGradient id="wall"><stop offset="0" stop-color="#55544f" /><stop offset=".1" stop-color="#333331" /><stop offset=".3" stop-color="#4b4c48" /><stop offset=".6" stop-color="#3b3a37" /><stop offset=".9" stop-color="#474540" /><stop offset="1" stop-color="#565550" /></linearGradient>
          <clipPath id="recess"><ellipse cx="828" cy="547" rx="525" ry="405" /></clipPath>
        </defs>
        <g fill="none">
          <path :d="minor" stroke="#f1f1f1" stroke-width="1.300" />
          <path :d="major" stroke="#d8d8d8" stroke-width="1.400" />
          <path :d="edge" stroke="#8c8c8c" stroke-width="1.400" />
          <path :d="xAxis" stroke="#ffa6a6" stroke-width="1.500" />
          <path :d="yAxis" stroke="#9dfb9d" stroke-width="1.500" />
        </g>
        <g class="cup" transform="translate(950 360) scale(.42092 .33333)">
          <ellipse cx="785" cy="2400" rx="728" ry="532" fill="#000" opacity=".2" />
          <path fill="url(#cupBody)" d="M178 1200L278 2400A508 373 0 0 0 1293 2400L1393 1200z" />
          <path class="ln" d="M278 2400A508 373 0 0 0 1293 2400" />
          <path d="M181 1240L278 2400M1390 1240L1293 2400" fill="none" stroke="#666" stroke-dasharray="2 5" />
          <path class="edge" fill="url(#skirt)" d="M55 935A730 535 0 0 0 1516 935Q1516 870 1498 810L75 810Q55 870 55 935z" />
          <path d="M100 1090A710 415 0 0 0 1470 1090" fill="none" stroke="#77766f" stroke-width="8" opacity=".35" />
          <path class="edge" fill="#4b4a46" d="M75 810A711 480 0 0 1 1498 810L1498 840A711 550 0 0 1 75 840z" />
          <path class="edge" fill="#444340" d="M82 800A704 465 0 0 1 1490 800A704 535 0 0 1 82 800z" />
          <path class="ln" fill="#3b3b38" d="M115 800A670 440 0 0 1 1456 800A670 515 0 0 1 115 800z" />
          <path class="ln" fill="#5d5c57" d="M140 800A645 440 0 0 1 1432 800A645 492 0 0 1 140 800z" />
          <path fill="#b9b6aa" d="M173 500L148 770Q150 850 170 900L400 800L1250 800L1412 900Q1430 830 1426 760L1404 540z" />
          <path fill="url(#dome)" d="M173 490Q175 620 160 700Q160 790 172 880A620 440 0 0 0 1398 880Q1412 780 1404 540z" />
          <path class="ln" d="M190 900A600 398 0 0 0 1382 900" />
          <ellipse class="edge" cx="788" cy="524" rx="615" ry="471" transform="rotate(6 788 524)" fill="#56534b" />
          <ellipse class="ln" cx="789" cy="513" rx="600" ry="461" transform="rotate(6 789 513)" fill="#56534c" />
          <ellipse class="ln" cx="828" cy="547" rx="525" ry="405" fill="#5a5952" />
          <g clip-path="url(#recess)">
            <ellipse class="ln" cx="830" cy="580" rx="515" ry="417" fill="url(#wall)" />
            <ellipse class="ln" cx="830" cy="605" rx="503" ry="378" fill="#5c5a53" />
            <ellipse class="ln" cx="830" cy="610" rx="482" ry="343" fill="#56534c" />
          </g>
          <path class="ln" d="M458 245L465 268" />
          <path d="M845 247H882M872 157H880M896 160H904M706 979H714M727 981H735M734 1323H750" stroke="#ddd" stroke-width="1.500" fill="none" />
          <path fill="#22211f" stroke="#111" d="M303 252C303 225 415 140 455 130C490 124 515 145 512 168C505 195 400 262 372 281C345 295 303 287 303 252z" />
          <path fill="#393735" d="M306 240C320 215 420 143 460 132C445 150 345 215 306 240z" />
          <g class="slots">
            <path d="M600 1330L740 1342Q768 1350 765 1390Q755 1412 735 1406L615 1393Q585 1385 584 1352Q588 1332 600 1330zM594 1340Q596 1378 620 1384L762 1393M610 1362L760 1373" />
            <path d="M905 1340L1030 1315Q1058 1315 1055 1350L1045 1375L920 1401Q882 1400 878 1370Q880 1348 905 1340zM888 1360Q895 1392 925 1386L1040 1362L1050 1330M895 1368L1035 1345" />
            <path d="M342 1232L455 1285Q482 1305 478 1335Q470 1355 445 1345L350 1300Q320 1275 325 1245Q330 1230 342 1232zM334 1240Q335 1280 360 1292L470 1338M345 1272L475 1315" />
            <path d="M1175 1260L1275 1200Q1300 1190 1300 1220L1290 1260L1190 1320Q1158 1320 1158 1290zM1164 1285Q1170 1312 1190 1303L1285 1248L1294 1208M1172 1285L1283 1235" />
            <path d="M155 1068L215 1125Q245 1160 243 1205Q232 1220 215 1200L155 1120Q140 1085 148 1068zM152 1078Q155 1115 180 1140L238 1205M165 1110L240 1180" />
            <path d="M1385 1110L1438 1030Q1455 1010 1453 1040L1440 1090L1392 1160Q1370 1175 1374 1135zM1378 1140Q1382 1158 1396 1140L1436 1082L1448 1030M1388 1128L1436 1068" />
            <path d="M75 890Q95 920 102 1015Q90 1020 80 980Q72 930 75 890zM1495 850Q1502 880 1494 960Q1484 975 1486 940z" />
          </g>
          <ellipse class="band-edge" cx="786" cy="832" rx="621" ry="452" />
          <ellipse class="band" cx="786" cy="832" rx="621" ry="452" />
          <path fill="#1a82b3" stroke="#fff" stroke-width="3" d="M1125 1070L1195 1069L1182 1088L1212 1130L1197 1157L1166 1120L1150 1156z" />
        </g>
        <text x="1461" y="735" class="dimtext">2</text>
        <g class="viewcube">
          <ellipse cx="2500" cy="306" rx="40" ry="17" fill="#000" opacity=".12" filter="blur(4px)" />
          <path fill="#f7f7f7" d="M2497 249L2463 264L2497 284L2533 264z" /><path fill="#eee" d="M2463 264L2497 284V325L2466 304z" /><path fill="#e9e9e9" d="M2533 264L2497 284V325L2529 303z" />
          <path fill="none" stroke="#999" d="M2497 249L2463 264L2497 284L2533 264zM2497 284V325M2466 304L2497 325L2529 303L2533 264M2463 264L2466 304" />
          <path stroke="#8080ff" stroke-width="2" d="M2461 257L2466 304" /><path stroke="#ff8080" stroke-width="2" d="M2466 304L2503 330" />
          <text x="2455" y="255" fill="#8080ff">Z</text><text x="2503" y="340" fill="#ff8080">X</text>
          <text class="face" x="2488" y="265" transform="rotate(12 2488 265)">TOP</text><text class="face" x="2468" y="291" transform="rotate(28 2468 291)">FRONT</text><text class="face" x="2504" y="305" transform="rotate(-26 2504 305)">RIGHT</text>
        </g>
      </svg>

      <aside class="browser">
        <div class="panelhead"><svg class="rewind" viewBox="0 0 16 10"><path fill="#333" d="M8 0V10L0 5zM16 0V10L8 5z" /></svg><h2>BROWSER</h2><button aria-label="Collapse browser"><svg class="i14"><use href="#i-minus" /></svg></button></div>
        <ul class="tree">
          <li class="root">
            <button class="toggle" aria-label="Toggle"><svg class="i12"><use href="#i-open" /></svg></button>
            <div class="chip">
              <span class="mark"></span>
              <svg class="eye"><use href="#i-eye" /></svg>
              <span class="active-doc"><span class="cube"><svg viewBox="0 0 22 20"><path fill="#e4e8f0" stroke="#777" d="M1 5L5 1H21V15L17 19H1z" /><path fill="#c3cad6" d="M17 5L21 1V15L17 19z" /></svg></span><b>(Unsaved)</b></span>
              <input type="radio" name="active" aria-label="Activate component" checked />
            </div>
          </li>
          <li v-for="n in tree" :key="n.label" :class="['l' + n.level, { tight: n.tight, wide: n.wide }]">
            <button v-if="n.toggle" class="toggle" aria-label="Toggle"><svg :class="n.toggle === 'open' ? 'i12' : 'i14'"><use :href="'#i-' + n.toggle" /></svg></button>
            <div class="chip">
              <span v-for="c in n.cells" :key="c" class="cell" :class="c"><svg><use :href="'#i-' + c" /></svg></span>
              <span class="label">{{ n.label }}</span>
            </div>
          </li>
        </ul>
      </aside>

      <div class="readonly">
        <svg class="redlock"><use href="#i-lock" /></svg><b>Read-Only:</b><span class="limit">Document limit has been reached</span><a href="#">My Editable Documents</a>
      </div>

      <div class="floatval">
        <svg class="grip" viewBox="0 0 10 30"><path d="M2 1V29M6 3V30" stroke="#c4c4c4" stroke-width="2" stroke-dasharray="2 3" /></svg>
        <div class="valbox"><input ref="floatingValue" value="2 mm" aria-label="Thickness value" /><i></i></div>
        <button aria-label="More"><svg viewBox="0 0 4 20"><circle cx="2" cy="2" r="2" /><circle cx="2" cy="10" r="2" /><circle cx="2" cy="18" r="2" /></svg></button>
      </div>

      <form class="feature" @submit.prevent>
        <div class="fhead"><svg class="i14"><use href="#i-minus" /></svg><h2>EDIT FEATURE</h2><svg class="forward" viewBox="0 0 16 10"><path fill="#333" d="M0 0V10L8 5zM8 0V10L16 5z" /></svg></div>
        <div class="fbody">
          <span>Faces/Body</span>
          <div class="ctl"><button class="pick" type="button"><svg viewBox="0 0 16 22"><path fill="#fff" stroke="#555" stroke-width="1.300" d="M1 1V17L5 14L8 21L11 19L8 13H14z" /></svg>1 selected</button><button class="clear" type="button" aria-label="Clear"><svg viewBox="0 0 14 14"><path d="M1 1L13 13M13 1L1 13" stroke="#555" stroke-width="3" /></svg></button></div>
          <label for="chain">Tangent Chain</label>
          <div class="ctl"><input id="chain" v-model="chain" type="checkbox" /></div>
          <span>Shell Type</span>
          <div class="ctl">
            <button class="kind on" type="button" aria-label="Sharp"><svg viewBox="0 0 24 24"><path fill="#5eaee8" stroke="#e8f4fc" stroke-width="1.500" d="M1 22V9L8 2H23V16L16 22z" /><path fill="#3b8fd0" d="M3 20V10L9 4V15z" /><path fill="#8accf7" d="M3 20L9 15H21L15 20z" /></svg></button>
            <button class="kind" type="button" aria-label="Rounded"><svg viewBox="0 0 24 24"><path fill="#ddd" stroke="#666" stroke-width="2" d="M1 19V9Q2 2 9 1H23V14Q21 22 13 23H5z" /><path fill="#66aee2" d="M4 17V10Q6 4 11 4H21V13Q19 20 12 20H7z" /><path fill="#2d7cbc" d="M10 5L13 12L21 14L12 17L5 18L9 13z" /></svg></button>
          </div>
          <label for="thick">Inside Thickness</label>
          <div class="ctl"><input id="thick" v-model="thickness" type="text" /></div>
          <label for="dir">Direction</label>
          <div class="ctl"><div class="selectbox"><svg class="diric" viewBox="0 0 24 24"><path fill="#fbb583" stroke="#e8925b" d="M8 1L22 6V17L8 12z" /><path d="M15 8L3 20" stroke="#555" stroke-width="2" /><path fill="#555" d="M0 23V15L7 22z" /></svg><select id="dir"><option>Inside</option><option>Outside</option></select><svg class="arrow"><use href="#i-down" /></svg></div></div>
        </div>
        <div class="ffoot"><svg class="info" viewBox="0 0 18 18"><circle cx="9" cy="9" r="9" /><path fill="#fff" d="M8 3h3v3H8zM7 7h4v6h1v2H6v-2h2V9H7z" /></svg><button type="submit">OK</button><button type="button">Cancel</button></div>
      </form>

      <div class="comments panelhead"><h2>COMMENTS</h2><button aria-label="Expand comments"><svg class="i14"><use href="#i-plus" /></svg></button></div>

      <div class="navbar">
        <button v-for="t in navTools" :key="t.icon" :class="{ menu: t.menu }" :aria-label="t.icon"><svg class="i24"><use :href="'#i-' + t.icon" /></svg><svg v-if="t.menu" class="arrow"><use href="#i-down" /></svg></button>
      </div>

      <div class="hint">Face</div>
    </main>

    <footer class="timeline">
      <div class="playback"><button v-for="b in playback" :key="b" :aria-label="b"><svg class="i24"><use :href="'#i-' + b" /></svg></button></div>
      <div class="track">
        <span class="group"></span>
        <button v-for="(f, i) in timeline" :key="i" class="feat" :class="{ off: i >= firstSuppressed }" :aria-label="f"><svg><use :href="'#i-' + f" /></svg></button>
      </div>
      <svg class="marker" viewBox="0 0 18 49"><path fill="#666" d="M0 0H18V7L11 14V49H7V14L0 7z" /></svg>
      <button class="settings" aria-label="Timeline settings"><svg class="i24"><use href="#i-gear" /></svg></button>
    </footer>
    <div class="desktop"></div>
  </div>
</template>

<style>
body { margin: 0; background: #b5c0cc; }
</style>

<style scoped>
.app { min-height: 100vh; display: flex; flex-direction: column; font: 16px/20px "Liberation Sans", Arial, sans-serif; color: #333; background: #f1f1f1; }
.app * { box-sizing: border-box; }
.defs { position: absolute; width: 0; height: 0; }
button { font: inherit; color: inherit; border: 0; background: none; padding: 0; display: flex; align-items: center; justify-content: center; }
h1, h2 { margin: 0; font-weight: 400; }
svg { display: block; flex: none; overflow: visible; }
.arrow { width: 10px; height: 8px; }
.i12 { width: 12px; height: 12px; }
.i14 { width: 14px; height: 14px; }
.i24 { width: 24px; height: 24px; }
.i26 { width: 26px; height: 26px; }
.i48 { width: 48px; height: 48px; }

.titlebar { height: 45px; border-top: 2px solid #949daa; border-radius: 8px 8px 0 0; background: #f3f3f3; display: flex; align-items: center; padding: 0 26px 4px 12px; }
.logo { width: 22px; height: 24px; margin-right: 6px; }
h1 { font: 17px/24px "Open Sans", "Noto Sans", sans-serif; color: #8c8c8c; }
.window-controls { margin-left: auto; display: flex; gap: 54px; }
.window-controls svg { width: 16px; height: 16px; fill: none; stroke: #777; stroke-width: 1; }

.docbar { height: 48px; background: #cacaca; display: flex; padding-top: 6px; }
.quick { width: 289px; display: flex; gap: 26px; align-items: center; padding: 0 0 6px 12px; color: #555; }
.quick button { gap: 7px; }
.history { display: flex; gap: 16px; }
.dim { color: #8c8c8c; }
.doctab { flex: 1; background: #f1f1f1; border-radius: 6px 6px 0 0; display: flex; align-items: center; position: relative; justify-content: center; padding: 3px 14px 0 0; }
.docname { display: flex; gap: 10px; align-items: center; }
.doclock { width: 18px; height: 22px; }
.tabclose { position: absolute; right: 10px; }
.tabclose svg { width: 14px; height: 14px; }
.newtab { width: 42px; margin-left: 6px; background: #b9b9b9; border-radius: 6px 6px 0 0; }
.newtab svg { width: 20px; height: 20px; }
.account { display: flex; align-items: center; gap: 24px; padding: 0 19px 6px 17px; }
.avatar { margin-left: 5px; }
.avatar svg { width: 36px; height: 36px; }

.toolbar { display: flex; height: 123px; border-bottom: 2px solid #d8d8d8; margin-bottom: 5px; background: #f1f1f1; }
.workspace { width: 165px; height: 91px; margin: 16px 6px 0 17px; border: 2px solid #cbcbcb; border-radius: 6px; font-weight: 700; gap: 8px; }
.tabs { display: flex; gap: 35px; padding-left: 20px; }
.tabs button { padding: 7px 18px 4px; height: 35px; border-bottom: 4px solid transparent; align-items: flex-start; }
.tabs .active { color: #0696d7; border-color: #0696d7; }
.panels { display: flex; padding-top: 5px; }
.panel { display: flex; flex-direction: column; align-items: center; border-right: 2px solid #d3d3d3; height: 76px; }
.panel:last-child { border: 0; }
.tools { display: flex; padding: 0 6px; }
.tools button { width: 65px; height: 48px; }
.tools.off { opacity: .25; }
.menu { gap: 5px; }
.panel .menu { padding: 9px 20px 0; }

.canvas { flex: 1; position: relative; overflow: hidden; background: #fff; }
.scene { position: absolute; inset: 0; width: 100%; height: 100%; }
.cup path, .cup ellipse { vector-effect: non-scaling-stroke; }
.ln { stroke: #1c1c1a; stroke-width: 1; }
.ln:not([fill]) { fill: none; }
.edge { stroke: #1c1c1a; stroke-width: 1.5; }
.slots path { fill: none; stroke: #191918; stroke-width: 1.5; }
.band-edge { fill: none; stroke: #aaa69f; stroke-width: 13; }
.band { fill: none; stroke: #2c60b0; stroke-width: 9; }
.dimtext { font-size: 20px; fill: #222; }
.viewcube text { font: 700 14px "Liberation Sans", sans-serif; }
.viewcube .face { font-size: 8px; fill: #a5a5a5; }

.panelhead { height: 37px; background: #f1f1f1; border: 1px solid #c6c6c6; border-bottom-width: 2px; display: flex; align-items: center; color: #555; }
.panelhead h2 { font-size: 16px; flex: 1; }
.panelhead button { margin-right: 16px; }
.browser { position: absolute; left: 6px; top: 6px; width: 449px; }
.rewind { width: 16px; height: 10px; margin: 0 14px 0 7px; }
.tree { list-style: none; margin: 8px 0 0; padding: 0 0 0 23px; display: flex; flex-direction: column; gap: 6px; }
.tree li { display: flex; height: 30px; }
.toggle { width: 20px; margin-right: 11px; }
.l1 { padding-left: 27px; }
.l2 { padding-left: 85px; }
.chip { display: flex; align-items: center; background: #f1f1f1; }
.root .chip { padding: 0 10px 0 3px; }
.mark { width: 4px; height: 24px; background: #e390e6; margin-right: 5px; }
.eye { width: 24px; height: 16px; margin-right: 9px; }
.active-doc { display: flex; height: 24px; background: #959595; color: #fff; line-height: 24px; }
.cube { width: 38px; border-right: 1px solid #b5b5b5; display: flex; align-items: center; padding-left: 6px; }
.cube svg { width: 22px; height: 20px; }
.active-doc b { width: 109px; text-align: center; }
.root input { appearance: none; width: 20px; height: 20px; margin: 0 0 0 7px; border: 1px solid #555; border-radius: 50%; background: radial-gradient(#333 0 4px, #dfe3ee 5px); }
.cell { width: 38px; height: 30px; border-right: 1px solid #fafafa; display: flex; align-items: center; padding-left: 4px; }
.cell + .cell { width: 32px; border: 0; }
.cell svg { width: 24px; height: 24px; }
.cell.eye, .cell.hidden { margin: 0; padding-left: 5px; width: 38px; height: 30px; }
.cell.eye svg, .cell.hidden svg { height: 16px; }
.cell.folder svg { width: 26px; height: 22px; }
.cell.gear { width: 32px; color: #808080; }
.cell.gear svg { width: 22px; height: 22px; }
.label { padding: 0 16px 0 18px; white-space: nowrap; }
.tight .label { padding: 0 18px 0 12px; }
.wide .label { padding-right: 20px; }

.readonly { position: absolute; top: 6px; left: 50%; transform: translateX(-50%); width: 638px; height: 36px; background: #f1f1f1; display: flex; align-items: center; padding-left: 8px; white-space: nowrap; }
.redlock { width: 18px; height: 22px; color: #e12222; margin-right: 12px; }
.limit { margin-left: 35px; padding-right: 30px; line-height: 34px; border-right: 1px solid #c0c0c0; }
.readonly a { color: #0a6ebd; text-decoration: none; padding-left: 20px; }

.floatval { position: absolute; left: 660px; top: 430px; width: 162px; height: 33px; background: #f1f1f1; display: flex; align-items: center; }
.grip { width: 10px; height: 30px; margin: 0 3px 0 3px; }
.valbox { position: relative; border-left: 1px solid #b5b5b5; padding-left: 4px; }
.valbox input { width: 106px; height: 29px; border: 1px solid #c6c6c6; background: #fff; text-align: center; font: inherit; outline: 0; padding: 0; display: block; }
.valbox input::selection { background: #267f91; color: #fff; }
.valbox i { position: absolute; left: 75px; top: 6px; width: 2px; height: 19px; background: #d66e62; }
.floatval button { margin-left: 16px; }
.floatval button svg { width: 4px; height: 20px; fill: #777; }

.feature { position: absolute; right: 5px; top: 126px; width: 375px; background: #f1f1f1; border: 1px solid #c6c6c6; border-bottom-width: 2px; }
.fhead { height: 36px; border-bottom: 2px solid #c6c6c6; display: flex; align-items: center; gap: 6px; padding: 0 6px 0 17px; color: #555; }
.fhead h2 { font-size: 17px; flex: 1; }
.forward { width: 16px; height: 10px; }
.fbody { display: grid; grid-template-columns: 143px 1fr; grid-auto-rows: 45px; align-items: center; padding-left: 19px; }
.ctl { display: flex; align-items: center; }
.pick { background: #0696d7; color: #fff; width: 117px; height: 40px; gap: 8px; }
.pick svg { width: 16px; height: 22px; }
.clear { margin-left: 16px; }
.clear svg { width: 14px; height: 14px; }
#chain { appearance: none; width: 20px; height: 20px; margin: 0 0 0 7px; border: 2px solid #555; border-radius: 4px; background: linear-gradient(#c9c9c9, #f4f4f4); display: flex; justify-content: center; }
#chain:checked::after { content: ""; width: 6px; height: 12px; border: solid #111; border-width: 0 2px 2px 0; transform: rotate(40deg); }
.kind { width: 34px; height: 40px; margin-right: 10px; }
.kind.on { background: #0696d7; }
.kind svg { width: 24px; height: 24px; }
#thick, .selectbox { width: 163px; height: 38px; background: #fff; border: 1px solid #c6c6c6; }
#thick { font: inherit; color: inherit; padding: 0 4px; }
.selectbox { position: relative; }
.selectbox select { appearance: none; width: 100%; height: 100%; border: 0; background: none; font: inherit; color: inherit; padding: 0 0 0 34px; }
.diric { position: absolute; left: 4px; top: 7px; width: 24px; height: 24px; }
.selectbox .arrow { position: absolute; right: 8px; top: 16px; height: 6px; color: #111; }
.ffoot { height: 54px; border-top: 1px solid #c6c6c6; display: flex; align-items: center; gap: 15px; padding: 4px 17px 0 12px; }
.info { width: 18px; height: 18px; margin-right: auto; }
.ffoot button { width: 90px; height: 30px; border: 2px solid #bdbdbd; background: #ebebeb; font-size: 17px; color: #666; }

.comments { position: absolute; left: 6px; bottom: 8px; width: 449px; border-top-color: #f1f1f1; padding-left: 37px; }
.navbar { position: absolute; left: 50%; bottom: 9px; margin-left: -177px; width: 356px; height: 36px; background: #f1f1f1; border-right: 1px solid #c6c6c6; display: flex; align-items: center; gap: 13px; padding: 0 4px; }
.navbar .menu { gap: 6px; }
.navbar button + .menu { margin-right: -5px; }
.navbar .arrow { height: 6px; }
.hint { position: absolute; right: 26px; bottom: 15px; font-weight: 700; color: #111; }

.timeline { height: 70px; border-top: 1px solid #d5d5d5; background: #f1f1f1; display: flex; border-bottom: 2px solid #b9b4b4; }
.playback { display: flex; gap: 14px; padding: 23px 25px 0 12px; width: 212px; height: 48px; }
.track { display: grid; grid-template-columns: repeat(27, 36px); grid-template-rows: 9px 42px; padding-top: 11px; align-content: start; }
.group { grid-column: 1 / 24; background: #e390e6; margin: 0 2px 0 4px; }
.feat { grid-row: 2; position: relative; align-items: flex-start; padding-top: 3px; border-bottom: 3px solid #c8c8c8; }
.feat svg { width: 25px; height: 25px; }
.feat.off svg { opacity: .25; }
.feat::after { content: ""; position: absolute; left: 18px; bottom: 0; width: 3px; height: 8px; background: #c8c8c8; }
.feat:nth-child(2) { border-image: linear-gradient(90deg, transparent 50%, #c8c8c8 50%) 3; }
.feat:last-child { border-image: linear-gradient(90deg, #c8c8c8 58%, transparent 58%) 3; }
.marker { width: 18px; height: 49px; margin: 14px 0 0 -8px; }
.settings { margin-left: auto; padding-right: 20px; color: #666; }
.desktop { height: 7px; background: linear-gradient(90deg, #f8e5dc 30%, #d6e7f0 48% 60%, #f3e4de 70%); }
</style>
